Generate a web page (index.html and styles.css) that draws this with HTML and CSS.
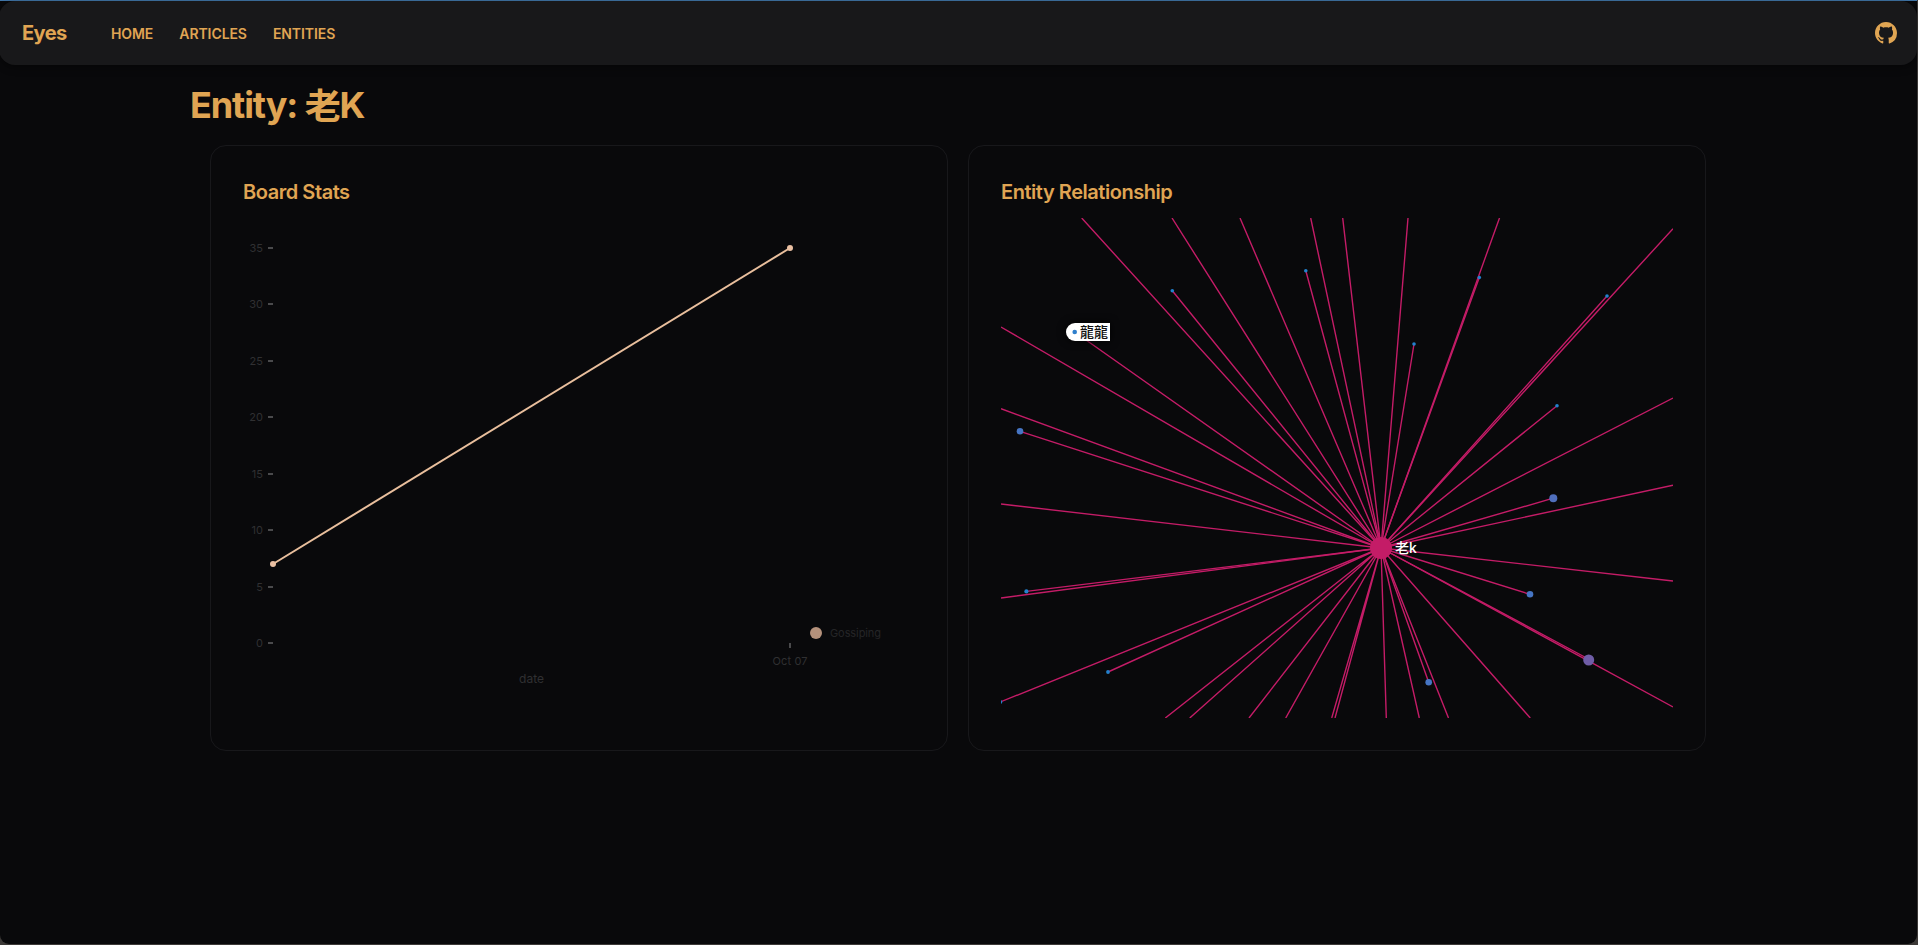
FILE: index.html
```
<!DOCTYPE html>
<html lang="en">
<head>
<meta charset="utf-8">
<title>Eyes</title>
<link rel="stylesheet" href="styles.css">
</head>
<body>
<div class="window">
  <header class="navbar">
    <a class="brand">Eyes</a>
    <nav class="links"><a class="home">HOME</a><a class="articles">ARTICLES</a><a class="entities">ENTITIES</a></nav>
    <svg class="github" viewBox="0 0 16 16" width="22" height="22"><path fill="currentColor" d="M8 0C3.58 0 0 3.58 0 8c0 3.54 2.29 6.53 5.47 7.59.4.07.55-.17.55-.38 0-.19-.01-.82-.01-1.49-2.01.37-2.53-.49-2.69-.94-.09-.23-.48-.94-.82-1.13-.28-.15-.68-.52-.01-.53.63-.01 1.08.58 1.23.82.72 1.21 1.87.87 2.33.66.07-.52.28-.87.51-1.07-1.78-.2-3.64-.89-3.64-3.95 0-.87.31-1.59.82-2.15-.08-.2-.36-1.02.08-2.12 0 0 .67-.21 2.2.82.64-.18 1.32-.27 2-.27s1.36.09 2 .27c1.53-1.04 2.2-.82 2.2-.82.44 1.1.16 1.92.08 2.12.51.56.82 1.27.82 2.15 0 3.07-1.87 3.75-3.65 3.95.29.25.54.73.54 1.48 0 1.07-.01 1.93-.01 2.2 0 .21.15.46.55.38A8.01 8.01 0 0 0 16 8c0-4.42-3.58-8-8-8z"/></svg>
  </header>
  <main class="content">
    <h1 class="title">Entity: <span class="han">老</span>K</h1>
    <div class="cards">
      <section class="card">
        <h2 class="heading">Board Stats</h2>
        <svg class="chart" width="672" height="500" viewBox="0 0 672 500">
          <g class="ticks">
            <path d="M25 30h5M25 86h5M25 143h5M25 199h5M25 256h5M25 312h5M25 369h5M25 425h5M547 425v5"/>
          </g>
          <g class="labels end">
            <text x="20" y="34">35</text><text x="20" y="90">30</text><text x="20" y="147">25</text><text x="20" y="203">20</text>
            <text x="20" y="260">15</text><text x="20" y="316">10</text><text x="20" y="373">5</text><text x="20" y="429">0</text>
          </g>
          <g class="labels mid"><text x="547" y="447" textLength="35">Oct 07</text><text class="axis" x="288.5" y="465" textLength="25">date</text></g>
          <path class="series" d="M30 346L547 30"/>
          <circle class="point" cx="30" cy="346" r="3"/><circle class="point" cx="547" cy="30" r="3"/>
          <circle class="legend-dot" cx="573" cy="415" r="6"/>
          <text class="legend-text" x="587" y="419" textLength="51">Gossiping</text>
        </svg>
      </section>
      <section class="card">
        <h2 class="heading relation">Entity Relationship</h2>
        <svg class="graph" width="672" height="500" viewBox="0 0 672 500">
          <g class="edges">
            <path d="M380 330L80.7 0M380 330L171 0M380 330L239 0M380 330L309.7 0M380 330L341.7 0M380 330L407 0M380 330L498.5 0"/>
            <path d="M380 330L672 10.7M380 330L672 180M380 330L672 267.3M380 330L672 363M380 330L672 489"/>
            <path d="M380 330L0 109M380 330L0 190.7M380 330L0 286M380 330L0 380M380 330L0 483.7"/>
            <path d="M380 330L164.3 500M380 330L188.7 500M380 330L248 500M380 330L284.7 500M380 330L330.7 500M380 330L334 500M380 330L385.3 500M380 330L418.3 500M380 330L447.5 500M380 330L529.3 500"/>
            <path d="M380 330L171.3 72.7M380 330L304.8 52.7M380 330L73.7 114M380 330L19 213.3M380 330L478.3 59.5M380 330L606 78M380 330L413 126M380 330L556 187.7M380 330L552.3 280.2M380 330L529 376.3M380 330L586.5 440.5M380 330L427.7 464.3M380 330L25.4 373.4M380 330L107 454"/>
          </g>
          <g fill="#2282ce">
            <circle cx="171.3" cy="72.7" r="1.8"/><circle cx="304.8" cy="52.7" r="1.8"/><circle cx="478.3" cy="59.5" r="1.8"/>
            <circle cx="606" cy="78" r="1.8"/><circle cx="413" cy="126" r="1.8"/><circle cx="556" cy="187.7" r="1.8"/>
            <circle cx="25.4" cy="373.4" r="2.1"/><circle cx="107" cy="454" r="1.9"/><circle cx="-.5" cy="484" r="1.8"/>
          </g>
          <g fill="#4675c4">
            <circle cx="19" cy="213.3" r="3.3"/><circle cx="529" cy="376.3" r="3.3"/><circle cx="427.7" cy="464.3" r="3.3"/>
            <circle cx="552.3" cy="280.2" r="4" fill="#506fbd"/><circle cx="587.7" cy="442" r="5.5" fill="#6f5da7"/>
          </g>
          <circle cx="380" cy="330" r="11" fill="#c41c67"/>
          <text class="node-label" x="394" y="335">老k</text>
          <path class="hover" d="M109 105H74a9 9 0 0 0 0 18H109Z"/>
          <circle cx="73.7" cy="114" r="2.3" fill="#2f7fcc"/>
          <text class="hover-label" x="79" y="119">龍龍</text>
        </svg>
      </section>
    </div>
  </main>
</div>
</body>
</html>
```
FILE: styles.css
```
* { box-sizing: border-box; }
body {
  margin: 0;
  height: 945px;
  overflow: hidden;
  background: #3c3937;
  font-family: Inter, "Noto Sans CJK TC", sans-serif;
  color: #e0a553;
}
.window {
  height: 944px;
  margin-right: 1px;
  background: #09090b;
  border-top: 1px solid #4278ac;
  border-radius: 0 0 9px 9px;
}
.navbar {
  display: flex;
  align-items: center;
  height: 64px;
  margin-left: -1px;
  padding: 0 20px 0 23px;
  background: #18181a;
  border-radius: 16px;
  box-shadow: 0 2px 8px rgba(0, 0, 0, .45);
}
.brand { width: 89px; font-size: 20px; font-weight: 700; letter-spacing: -.6px; }
.links { display: flex; gap: 26px; font-size: 14px; font-weight: 600; letter-spacing: -.08px; }
.github { margin-left: auto; }
.content { width: 1536px; margin: 0 0 0 190px; padding: 20px 0 0; }
.title {
  margin: 0;
  height: 40px;
  font-size: 36px;
  line-height: 40px;
  font-weight: 700;
  letter-spacing: -1.1px;
}
.han { position: relative; top: 2px; }
.cards { display: grid; grid-template-columns: 738px 738px; gap: 20px; padding: 20px 0 0 20px; }
.card { height: 606px; padding: 32px; border: 1px solid #18181b; border-radius: 16px; }
.heading {
  margin: 0 0 12px;
  height: 28px;
  font-size: 20px;
  line-height: 28px;
  font-weight: 600;
  letter-spacing: -.45px;
}
.chart, .graph { display: block; }
.ticks { fill: none; stroke: #4a4a4c; stroke-width: 2; }
.labels { font-size: 11px; fill: #303032; }
.end { text-anchor: end; }
.mid { text-anchor: middle; }
.axis { font-size: 12px; }
.series { fill: none; stroke: #e9bf9d; stroke-width: 2; }
.point { fill: #eac0a3; }
.legend-dot { fill: #b4917b; }
.legend-text { font-size: 11px; fill: #252527; }
.edges { fill: none; stroke: #c41c67; stroke-width: 1.4; }
.node-label { font-size: 14px; font-weight: 500; fill: #fff; }
.hover { fill: #fff; filter: drop-shadow(0 0 4px #000); }
.hover-label { font-size: 14px; font-weight: 500; fill: #111; }
```
